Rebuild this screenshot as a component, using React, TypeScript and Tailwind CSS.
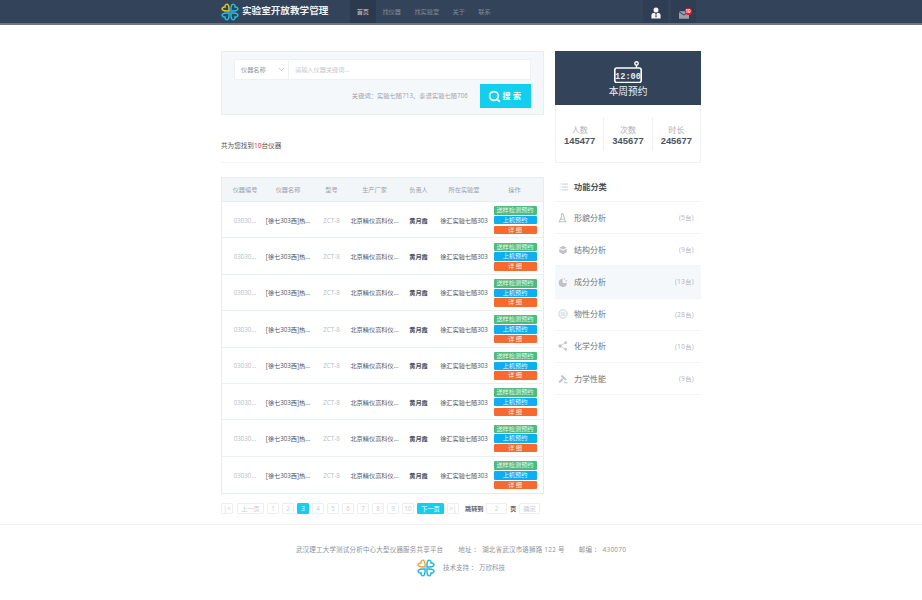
import { List, Search, ChevronDown } from "lucide-react";

const font = "font-['Open_Sans','Noto_Sans_CJK_SC',sans-serif]";

function Logo({ a, b }: { a: string; b: string }) {
  const heart = "M0 0 C-3 -3 -8 -7 -8 -11 C-8 -15 -3 -16 0 -12 C3 -16 8 -15 8 -11 C8 -7 3 -3 0 0 Z";
  return (
    <svg viewBox="-19 -19 38 38" className="w-[18px] h-[18px] shrink-0" fill="none" strokeWidth="3">
      <path d={heart} stroke={a} transform="translate(-2 -2) rotate(-45)" />
      <path d={heart} stroke={b} transform="translate(2 -2) rotate(45)" />
      <path d={heart} stroke={b} transform="translate(-2 2) rotate(-135)" />
      <path d={heart} stroke={b} transform="translate(2 2) rotate(135)" />
    </svg>
  );
}

const navItems = ["首页", "找仪器", "找实验室", "关于", "联系"];

function Header() {
  return (
    <div className="h-[25px] bg-[#33435a] border-b-2 border-[#6b7683]">
      <div className="w-[480px] ml-[221px] h-[23px] flex items-center">
        <Logo a="#e8c91a" b="#1fc3e0" />
        <span className="ml-[3px] w-[108px] text-[9.6px] font-bold text-[#eef1f4] whitespace-nowrap">实验室开放教学管理</span>
        <div className="flex h-full">
          {navItems.map((n, i) => (
            <span
              key={n}
              className={`h-full flex items-center px-[6.7px] text-[6.2px] whitespace-nowrap ${i === 0 ? "bg-[#2b3a4e] text-[#c9ced5]" : "text-[#7f8a98]"}`}
            >
              {n}
            </span>
          ))}
        </div>
        <div className="ml-auto flex h-full mr-[5px] gap-[3px]">
          <div className="w-[25px] h-full bg-[#2f3e53] flex items-center justify-center">
            <svg viewBox="0 0 12 14" className="w-[10px] h-[12px] mt-[2px]" fill="#f4f5f6">
              <circle cx="6" cy="3.4" r="3" />
              <path d="M0.5 13.5 V9.5 C0.5 7.5 2.5 7 4.5 6.8 L6 9 L7.5 6.8 C9.5 7 11.5 7.5 11.5 9.5 V13.5 Z" />
              <path d="M5.6 8.6 h0.8 l0.4 3 l-0.8 1 l-0.8 -1 Z" fill="#33435a" />
            </svg>
          </div>
          <div className="relative w-[25px] h-full bg-[#2f3e53] flex items-center justify-center">
            <svg viewBox="0 0 12 9" className="w-[10px] h-[8px] mt-[7px]" fill="#9aa1aa">
              <path d="M0 0 H12 L6 4 Z" />
              <path d="M0 1.2 L6 5.2 L12 1.2 V9 H0 Z" />
            </svg>
            <span className="absolute left-[13.5px] top-[7.5px] w-[7px] h-[7px] rounded-full bg-[#ee1c25] text-white text-[4.5px] font-bold flex items-center justify-center">
              10
            </span>
          </div>
        </div>
      </div>
    </div>
  );
}

function SearchPanel() {
  return (
    <div className="h-[64px] bg-[#f5f8fb] border border-[#e9eef3] pt-[7px] px-[12px]">
      <div className="flex h-[21px] bg-white border border-[#eef1f4]">
        <div className="w-[54px] flex items-center justify-between pl-[6px] pr-[2px] border-r border-[#eef1f4] text-[6.2px] text-[#8f959c]">
          <span>仪器名称</span>
          <ChevronDown className="w-[9px] h-[9px] text-[#9aa1a9]" strokeWidth={1.5} />
        </div>
        <div className="flex-1 flex items-center pl-[6px] text-[6.2px] text-[#c5c9ce]">请输入仪器关键词...</div>
      </div>
      <div className="flex items-center justify-end mt-[4px]">
        <span className="text-[6.2px] tracking-[0.1px] text-[#9aa0a7] mr-[12px]">关键词：实验七随713、泰谱实验七随706</span>
        <div className="w-[51px] h-[24px] bg-[#12cfee] flex items-center justify-center text-white text-[8px] font-bold">
          <Search className="w-[13px] h-[13px] mr-[2px]" strokeWidth={3.2} />
          <span className="tracking-[2.5px]">搜索</span>
        </div>
      </div>
    </div>
  );
}

const colClass = "grid grid-cols-[46px_40px_47px_39px_49px_42px_59px]";

function Cell({ className, children }: { className: string; children: string }) {
  return <div className={`flex items-center justify-center whitespace-nowrap text-[6.2px] pt-[1px] ${className}`}>{children}</div>;
}

function Row() {
  return (
    <div className={`${colClass} h-[36.4px] border-b border-[#e9f0f2] last:border-b-0`}>
      <Cell className="text-[#b4bcc6]">03030...</Cell>
      <Cell className="text-[#4b5360]">[徐七303西]热...</Cell>
      <Cell className="text-[#b4bcc6]">ZCT-8</Cell>
      <Cell className="text-[#4b5360]">北京精仪高科仪...</Cell>
      <Cell className="text-[#4b5360] font-bold">黄月霞</Cell>
      <Cell className="text-[#4b5360]">徐汇实验七随303</Cell>
      <div className="flex flex-col items-center justify-center gap-[1.2px] pl-[1px] pt-[1px]">
        <span className="w-[43px] h-[8.5px] rounded-[1px] bg-[#4dbb7c] text-[#e8f6ee] text-[6.2px] leading-[8.5px] text-center">送样检测预约</span>
        <span className="w-[43px] h-[8.5px] rounded-[1px] bg-[#0eaff0] text-[#e3f5fd] text-[6.2px] leading-[8.5px] text-center">上机预约</span>
        <span className="w-[43px] h-[8.5px] rounded-[1px] bg-[#f66a30] text-[#fff0e8] text-[6.2px] leading-[8.5px] text-center">详 细</span>
      </div>
    </div>
  );
}

function Table() {
  const heads = ["仪器编号", "仪器名称", "型号", "生产厂家", "负责人", "所在实验室", "操作"];
  return (
    <div className="mt-[14px] border border-[#e6edf0]">
      <div className={`${colClass} h-[24px] bg-[#f3f6f8] border-b border-[#e6edf0]`}>
        {heads.map((h) => (
          <Cell key={h} className="text-[#9aa2ac]">{h}</Cell>
        ))}
      </div>
      {Array.from({ length: 8 }).map((_, i) => (
        <Row key={i} />
      ))}
    </div>
  );
}

function PageBtn({ children, className, on }: { children: React.ReactNode; className: string; on?: boolean }) {
  return (
    <span
      className={`h-[11px] shrink-0 flex items-center justify-center rounded-[1px] border text-[6.2px] whitespace-nowrap ${className} ${on ? "bg-[#12cfee] border-[#12cfee] text-white" : "border-[#eceff2] text-[#c6cbd1]"}`}
    >
      {children}
    </span>
  );
}

function Pager() {
  return (
    <div className="mt-[9px] flex items-center">
      <PageBtn className="w-[12px]">|&lt;</PageBtn>
      <PageBtn className="w-[27px] ml-[4px]">上一页</PageBtn>
      <div className="flex gap-[3px] ml-[3px]">
        {["1", "2", "3", "4", "5", "6", "7", "8", "9", "10"].map((p) => (
          <PageBtn key={p} className="w-[12px]" on={p === "3"}>{p}</PageBtn>
        ))}
      </div>
      <PageBtn className="w-[27px] ml-[3px]" on>下一页</PageBtn>
      <PageBtn className="w-[12px] ml-[3px]">&gt;|</PageBtn>
      <span className="ml-[6px] w-[19px] shrink-0 whitespace-nowrap text-[6.2px] text-[#5f6670] font-bold">跳转到</span>
      <PageBtn className="w-[21px] ml-[2px]">2</PageBtn>
      <span className="ml-[3px] w-[6px] shrink-0 text-[6.2px] text-[#5f6670] font-bold">页</span>
      <PageBtn className="w-[21px] ml-[3px]">确定</PageBtn>
    </div>
  );
}

function CatIcon({ kind }: { kind: number }) {
  const c = "#bfc3c8";
  return (
    <svg viewBox="0 0 12 12" className="w-[10px] h-[10px] shrink-0">
      {kind === 0 && (
        <g fill="none" stroke={c} strokeWidth="1.3">
          <path d="M4 1 L4.5 4 L1.5 10.5 H10.5" />
          <path d="M3.5 1 H6 L9 10.5" />
          <path d="M3 7.5 L7.5 7.5" />
        </g>
      )}
      {kind === 1 && (
        <g fill={c}>
          <path d="M6 1 L10.5 3.2 L6 5.5 L1.5 3.2 Z" />
          <path d="M1.5 4.5 L6 6.8 L10.5 4.5 V8.8 L6 11 L1.5 8.8 Z" />
        </g>
      )}
      {kind === 2 && (
        <g fill={c}>
          <path d="M5.5 2 A5 5 0 1 0 10.8 7.5 L5.5 7 Z" />
          <path d="M7.2 1 L8.5 2 L7.5 3.5 L6.8 3 Z" />
          <circle cx="10" cy="4.6" r="1" />
        </g>
      )}
      {kind === 3 && (
        <g fill="none" stroke={c} strokeWidth="1">
          <circle cx="6" cy="6" r="5" />
          <path d="M3 4.8 H9 M3 7.2 H9" />
        </g>
      )}
      {kind === 4 && (
        <g fill={c} stroke={c} strokeWidth="0.9">
          <path d="M2.5 6 L9 2 M2.5 6 L9 10" fill="none" />
          <circle cx="2.5" cy="6" r="1.6" />
          <circle cx="9.3" cy="2" r="1.2" />
          <circle cx="9.3" cy="10" r="1.2" />
        </g>
      )}
      {kind === 5 && (
        <g fill={c}>
          <path d="M5 1 L10.5 6.5 L8.8 8 L3.4 2.6 Z" />
          <path d="M4.8 4.8 L6.5 6.5 L2.2 11 L0.6 9.3 Z" />
          <path d="M7.4 8.5 L9 10 H11.5 V11 H7.4 Z" />
        </g>
      )}
    </svg>
  );
}

const cats = [
  { name: "形貌分析", count: "(5台)" },
  { name: "结构分析", count: "(9台)" },
  { name: "成分分析", count: "(13台)", active: true },
  { name: "物性分析", count: "(28台)" },
  { name: "化学分析", count: "(10台)" },
  { name: "力学性能", count: "(9台)" },
];

function Sidebar() {
  return (
    <div className="w-[146px] ml-[11px] shrink-0">
      <div className="h-[54px] bg-[#33435a] flex flex-col items-center pt-[10px] text-white">
        <svg viewBox="0 0 28 22" className="w-[28px] h-[22px]">
          <circle cx="22.5" cy="2.5" r="1.7" fill="none" stroke="#fff" strokeWidth="1.4" />
          <path d="M22.5 4 V7" stroke="#fff" strokeWidth="1.4" />
          <rect x="0.8" y="7" width="26.4" height="14.5" rx="2" fill="none" stroke="#fff" strokeWidth="1.6" />
          <text x="14" y="17.5" textAnchor="middle" fontSize="8.6" fontWeight="700" fill="#e8ecf0" fontFamily="Liberation Mono">12:00</text>
        </svg>
        <span className="text-[9.7px] leading-[12px] mt-[3px] text-[#eef0f3]">本周预约</span>
      </div>
      <div className="h-[58px] border border-t-0 border-[#eef1f4] flex items-center">
        {[
          ["人数", "145477"],
          ["次数", "345677"],
          ["时长", "245677"],
        ].map(([l, v], i) => (
          <div key={l} className={`flex-1 h-[34px] flex flex-col items-center justify-center pt-[3px] ${i ? "border-l border-[#eef1f4]" : ""}`}>
            <span className="text-[8px] leading-[11px] text-[#aab0b9]">{l}</span>
            <span className="font-['Liberation_Sans'] text-[9.4px] leading-[11px] font-bold text-[#4a5464]">{v}</span>
          </div>
        ))}
      </div>
      <div className="mt-[8px] h-[31px] flex items-center border-b border-[#f2f4f6] pl-[4px] pt-[2px]">
        <List className="w-[10px] h-[10px] text-[#a9aeb4]" strokeWidth={1.5} />
        <span className="ml-[5px] text-[8.2px] font-bold text-[#4a4f57]">功能分类</span>
      </div>
      {cats.map(({ name, count, active }, i) => (
        <div key={name} className={`h-[32.2px] flex items-center pl-[3px] pr-[7px] border-b border-[#f2f4f6] ${active ? "bg-[#f5f8fb]" : ""}`}>
          <CatIcon kind={i} />
          <span className="ml-[6px] text-[8px] text-[#6f757d]">{name}</span>
          <span className="ml-auto text-[6.2px] tracking-[0.4px] text-[#a9afb6]">{count}</span>
        </div>
      ))}
    </div>
  );
}

function Footer() {
  return (
    <div className="mt-[10px] border-t border-[#eef0f2] h-[76px] flex flex-col items-center text-[6.5px] text-[#8e939a]">
      <div className="mt-[20px] tracking-[0.2px] whitespace-nowrap">
        武汉理工大学测试分析中心大型仪器服务共享平台<span className="ml-[15px]">地址 ： 湖北省武汉市珞狮路 122 号</span>
        <span className="ml-[14px]">邮编 ： 430070</span>
      </div>
      <div className="mt-[4px] flex items-center">
        <Logo a="#f7a23b" b="#1fb4d8" />
        <span className="ml-[8px]">技术支持 ： 万欣科技</span>
      </div>
    </div>
  );
}

export default function App() {
  return (
    <div className={`w-[922px] h-[600px] overflow-hidden bg-white ${font}`}>
      <Header />
      <div className="w-[480px] ml-[221px] mt-[26px] flex">
        <div className="w-[323px] shrink-0">
          <SearchPanel />
          <div className="mt-[26px] text-[6.6px] text-[#4f555c] h-[22px] border-b border-[#f2f4f6]">
            共为您找到<span className="text-[#ee1c25]">10</span>台仪器
          </div>
          <Table />
          <Pager />
        </div>
        <Sidebar />
      </div>
      <Footer />
    </div>
  );
}
